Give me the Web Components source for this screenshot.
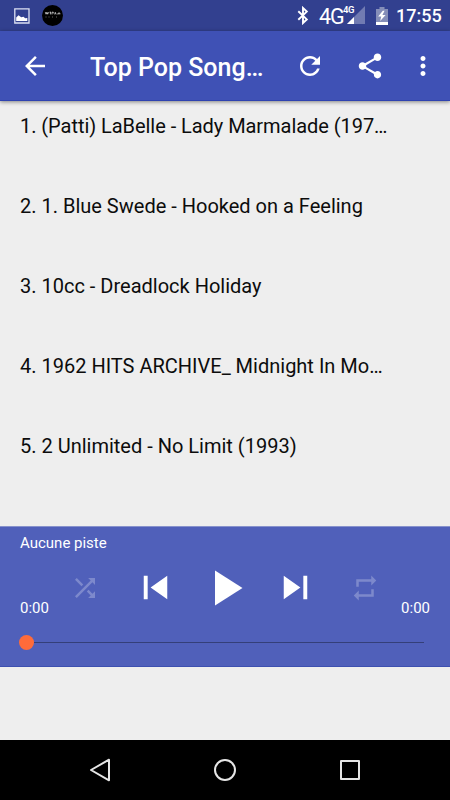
<!DOCTYPE html>
<html lang="fr">
<head>
<meta charset="utf-8">
<meta name="viewport" content="width=device-width, initial-scale=1">
<title>Top Pop Songs</title>
<style>
body {
    margin: 0;
    background: #eeeeee;
    font-family: Roboto, "Noto Sans", sans-serif;
}
</style>
</head>
<body>
<music-app>
    <status-bar slot="status" time="17:55"></status-bar>
    <app-toolbar slot="toolbar">Top Pop Song…</app-toolbar>
    <track-row style="letter-spacing: -0.05px">1. (Patti) LaBelle - Lady Marmalade (197…</track-row>
    <track-row>2. 1. Blue Swede - Hooked on a Feeling</track-row>
    <track-row>3. 10cc - Dreadlock Holiday</track-row>
    <track-row>4. 1962 HITS ARCHIVE_ Midnight In Mo…</track-row>
    <track-row>5. 2 Unlimited - No Limit (1993)</track-row>
    <music-player slot="player" elapsed="0:00" duration="0:00">Aucune piste</music-player>
    <nav-bar slot="nav"></nav-bar>
</music-app>

<script>
/** Path data of the icons, on a 24 unit grid. */
const ICONS = {
    back: "M20 11H7.83l5.59-5.59L12 4l-8 8 8 8 1.41-1.41L7.83 13H20v-2z",
    refresh: "M17.65 6.35C16.2 4.9 14.21 4 12 4c-4.42 0-7.99 3.58-7.99 8s3.57 8 7.99 8c3.73 0 6.84-2.55 7.73-6h-2.08c-.82 2.33-3.04 4-5.65 4-3.31 0-6-2.69-6-6s2.69-6 6-6c1.66 0 3.14.69 4.22 1.78L13 11h7V4l-2.35 2.35z",
    share: "M18 16.08c-.76 0-1.44.3-1.96.77L8.91 12.7c.05-.23.09-.46.09-.7s-.04-.47-.09-.7l7.05-4.11c.54.5 1.25.81 2.04.81 1.66 0 3-1.34 3-3s-1.34-3-3-3-3 1.34-3 3c0 .24.04.47.09.7L8.04 9.81C7.5 9.31 6.79 9 6 9c-1.66 0-3 1.34-3 3s1.34 3 3 3c.79 0 1.5-.31 2.04-.81l7.12 4.16c-.05.21-.08.43-.08.65 0 1.61 1.31 2.92 2.92 2.92s2.92-1.31 2.92-2.92-1.31-2.92-2.92-2.92z",
    more: "M12 8c1.1 0 2-.9 2-2s-.9-2-2-2-2 .9-2 2 .9 2 2 2zm0 2c-1.1 0-2 .9-2 2s.9 2 2 2 2-.9 2-2-.9-2-2-2zm0 6c-1.1 0-2 .9-2 2s.9 2 2 2 2-.9 2-2-.9-2-2-2z",
    shuffle: "M10.59 9.17L5.41 4 4 5.41l5.17 5.17 1.42-1.41zM14.5 4l2.04 2.04L4 18.59 5.41 20 17.96 7.46 20 9.5V4h-5.5zm.33 9.41l-1.41 1.41 3.13 3.13L14.5 20H20v-5.5l-2.04 2.04-3.13-3.13z",
    previous: "M6 6h2v12H6zm3.5 6l8.5 6V6z",
    play: "M8 5v14l11-7z",
    next: "M6 18l8.5-6L6 6v12zM16 6v12h2V6h-2z",
    repeat: "M7 7h10v3l4-4-4-4v3H5v6h2V7zm10 10H7v-3l-4 4 4 4v-3h12v-6h-2v4z"
};

class AppIcon extends HTMLElement {
    constructor() {
        super();
        this.attachShadow({ mode: "open" });
    }

    connectedCallback() {
        this.shadowRoot.innerHTML =
`
<style>
:host {
    display: block;
    flex: none;
    width: var(--icon-size, 30px);
    height: var(--icon-size, 30px);
}

svg {
    display: block;
    width: 100%;
    height: 100%;
    fill: currentColor;
}
</style>
<svg viewBox="0 0 24 24"><path d="${ICONS[this.getAttribute("name")]}"/></svg>
`;
    }
}

class MusicApp extends HTMLElement {
    constructor() {
        super();
        this.attachShadow({ mode: "open" }).innerHTML =
`
<style>
:host {
    display: flex;
    flex-direction: column;
    width: 450px;
    height: 800px;
    background: #eeeeee;
    overflow: hidden;
}

main {
    height: 425px;
    flex: none;
}

.space {
    flex: 1;
}
</style>
<slot name="status"></slot>
<slot name="toolbar"></slot>
<main><slot></slot></main>
<slot name="player"></slot>
<div class="space"></div>
<slot name="nav"></slot>
`;
    }
}

class StatusBar extends HTMLElement {
    constructor() {
        super();
        this.attachShadow({ mode: "open" });
    }

    connectedCallback() {
        this.shadowRoot.innerHTML =
`
<style>
:host {
    display: flex;
    align-items: center;
    flex: none;
    height: 31px;
    box-sizing: border-box;
    padding: 0 10px 0 14px;
    background: #32408f;
    color: #ffffff;
}

svg {
    display: block;
    flex: none;
}

.avatar {
    margin-left: 12px;
}

.bluetooth {
    margin-left: auto;
}

.network {
    display: flex;
    align-items: flex-start;
    flex: none;
    width: 48px;
    height: 31px;
    margin-left: 9px;
    font-family: Roboto, "Noto Sans", sans-serif;
}

.type {
    width: 24px;
    font-size: 21.5px;
    line-height: 33px;
    letter-spacing: -1.2px;
    white-space: nowrap;
}

/* The small label stands on the signal triangle. */
.signal {
    position: relative;
    width: 24px;
    height: 31px;
}

.signal svg {
    margin: 6px 0 0 4px;
}

.signal span {
    position: absolute;
    left: 0;
    top: 4px;
    font-size: 9.5px;
    font-weight: 600;
    line-height: 12px;
    letter-spacing: -0.4px;
}

.battery {
    margin-left: 9px;
}

.time {
    width: 44px;
    margin-left: 8px;
    font-size: 18px;
    font-weight: 500;
    line-height: 32px;
    white-space: nowrap;
}
</style>
<svg width="16" height="16" viewBox="0 0 16 16">
    <path d="M.8.8h14.2v14.2H.8z" fill="none" stroke="#dce0f3" stroke-width="1.3"/>
    <path d="M2.2 13V9.5L4.5 7.2l2.7 2 2.3-.4 1.6 1.5 2.2-.2V13z" fill="#fff"/>
</svg>
<svg class="avatar" width="21" height="21" viewBox="0 0 21 21">
    <circle cx="10.5" cy="10.5" r="10.5" fill="#000"/>
    <path d="M3.3 7.2l.8 2 .8-2 .8 2 .8-2M7.6 7.2H9M8.4 7.2v2.2M10 9.4V7.2h1.3v1.2M12.7 9.4l.6-2 .8 2M15 9h.6M16.3 9.4V8h1.5v1.4" fill="none" stroke="#ddd" stroke-width=".8"/>
    <path d="M3.5 12h1M6.5 12h1M10 12h1M14 12h1" stroke="#333" stroke-width="2"/>
</svg>
<svg class="bluetooth" width="13" height="19" viewBox="0 0 13 19">
    <path d="M1.3 5.2L9.8 13.4 6 17V2l3.8 3.6L1.3 13.8" fill="none" stroke="#fff" stroke-width="1.9"/>
</svg>
<div class="network">
    <span class="type">4G</span>
    <div class="signal">
        <svg width="18" height="18" viewBox="0 0 18 18">
            <path d="M18 0v18H0z" fill="#717bb2"/>
            <path d="M7 11v7H0z" fill="#fff"/>
        </svg>
        <span>4G</span>
    </div>
</div>
<svg class="battery" width="12" height="18" viewBox="0 0 12 18">
    <path d="M3.5 0h5v2H12v13H0V2h3.5z" fill="#858eb9"/>
    <path d="M0 15h12v3H0zM6.8 3.8L2.2 9.6h3L4.2 14l5.4-6H6.4l2.2-4.2z" fill="#fff"/>
</svg>
<span class="time"></span>
`;
        this.shadowRoot.querySelector(".time").textContent = this.getAttribute("time");
    }
}

class AppToolbar extends HTMLElement {
    constructor() {
        super();
        this.attachShadow({ mode: "open" }).innerHTML =
`
<style>
:host {
    display: flex;
    align-items: center;
    flex: none;
    z-index: 1;
    height: 70px;
    box-sizing: border-box;
    padding: 0 12.5px 0 20px;
    background: #3f51b5;
    border-bottom: 1px solid #2f43b0;
    box-shadow: 0 1px 4px rgba(0, 0, 0, 0.45);
    color: #ffffff;
}

h1 {
    flex: 1;
    margin: 5px 0 0 40px;
    font-size: 25px;
    font-weight: 500;
    line-height: 30px;
    white-space: nowrap;
}

app-icon {
    margin-top: 1px;
}

.share {
    margin: 1px 22.5px 0 30px;
}
</style>
<app-icon name="back"></app-icon>
<h1><slot></slot></h1>
<app-icon name="refresh"></app-icon>
<app-icon class="share" name="share"></app-icon>
<app-icon name="more"></app-icon>
`;
    }
}

class TrackRow extends HTMLElement {
    constructor() {
        super();
        this.attachShadow({ mode: "open" }).innerHTML =
`
<style>
:host {
    display: block;
    height: 80px;
    box-sizing: border-box;
    padding: 13px 20px 0;
    color: #0c0c0c;
    font-size: 20px;
    line-height: 24px;
    white-space: nowrap;
}
</style>
<slot></slot>
`;
    }
}

class MusicPlayer extends HTMLElement {
    constructor() {
        super();
        this.attachShadow({ mode: "open" });
    }

    connectedCallback() {
        this.shadowRoot.innerHTML =
`
<style>
:host {
    display: flex;
    flex-direction: column;
    flex: none;
    height: 141px;
    box-sizing: border-box;
    border-top: 1px solid #8792cc;
    border-bottom: 1px solid #3d50b0;
    background: #5060ba;
    color: #ffffff;
    font-size: 15px;
    line-height: 18px;
}

.title {
    padding: 7px 20px 0;
}

.controls {
    display: grid;
    grid-template-columns: 30px repeat(5, 70px) 30px;
    justify-content: center;
    align-items: center;
    justify-items: center;
    height: 60px;
    margin-top: 5.5px;
}

.controls span {
    align-self: end;
    margin-bottom: 0.5px;
    white-space: nowrap;
}

.off {
    color: #7d89cc;
}

.skip {
    --icon-size: 47px;
}

.play {
    --icon-size: 60px;
}

.elapsed {
    justify-self: start;
}

.duration {
    justify-self: end;
}

.seek {
    display: flex;
    align-items: center;
    margin: 17.5px 26px 0 19px;
}

.thumb {
    width: 15px;
    height: 15px;
    border-radius: 50%;
    background: #ff6b3a;
}

.track {
    flex: 1;
    height: 1px;
    background: #343f79;
}
</style>
<div class="title"><slot></slot></div>
<div class="controls">
    <span class="elapsed"></span>
    <app-icon class="off" name="shuffle"></app-icon>
    <app-icon class="skip" name="previous"></app-icon>
    <app-icon class="play" name="play"></app-icon>
    <app-icon class="skip" name="next"></app-icon>
    <app-icon class="off" name="repeat"></app-icon>
    <span class="duration"></span>
</div>
<div class="seek"><div class="thumb"></div><div class="track"></div></div>
`;
        this.shadowRoot.querySelector(".elapsed").textContent = this.getAttribute("elapsed");
        this.shadowRoot.querySelector(".duration").textContent = this.getAttribute("duration");
    }
}

class NavBar extends HTMLElement {
    constructor() {
        super();
        this.attachShadow({ mode: "open" }).innerHTML =
`
<style>
:host {
    display: grid;
    grid-template-columns: repeat(3, 125px);
    justify-content: center;
    align-items: center;
    justify-items: center;
    flex: none;
    height: 60px;
    background: #000000;
}

svg {
    fill: none;
    stroke: #e6e6e6;
    stroke-width: 2;
    stroke-linejoin: round;
}
</style>
<svg width="24" height="24" viewBox="0 0 24 24"><path d="M21 1.7v20.6L3 12z"/></svg>
<svg width="24" height="24" viewBox="0 0 24 24"><circle cx="12" cy="12" r="10"/></svg>
<svg width="24" height="24" viewBox="0 0 24 24"><path d="M3 3h18v18H3z"/></svg>
`;
    }
}

window.customElements.define("app-icon", AppIcon);
window.customElements.define("music-app", MusicApp);
window.customElements.define("status-bar", StatusBar);
window.customElements.define("app-toolbar", AppToolbar);
window.customElements.define("track-row", TrackRow);
window.customElements.define("music-player", MusicPlayer);
window.customElements.define("nav-bar", NavBar);
</script>
</body>
</html>
